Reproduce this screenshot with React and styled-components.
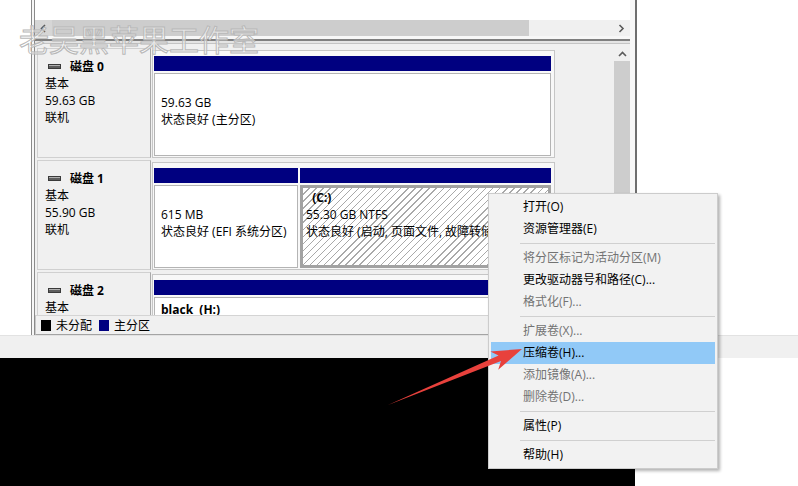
import styled, { createGlobalStyle } from 'styled-components';

const GlobalStyle = createGlobalStyle`
  body {
    margin: 0;
    font-family: "Open Sans", "Noto Sans CJK SC", sans-serif;
    font-size: 12px;
    color: #000;
  }
`;

const disks = [
  {
    name: '磁盘 0',
    lines: ['基本', '59.63 GB', '联机'],
    parts: [{ name: '', size: '59.63 GB', status: '状态良好 (主分区)' }],
  },
  {
    name: '磁盘 1',
    lines: ['基本', '55.90 GB', '联机'],
    parts: [
      { name: '', size: '615 MB', status: '状态良好 (EFI 系统分区)', width: 144 },
      {
        name: '  (C:)',
        size: '55.30 GB NTFS',
        status: '状态良好 (启动, 页面文件, 故障转储, 主分区)',
        selected: true,
      },
    ],
  },
  {
    name: '磁盘 2',
    lines: ['基本'],
    parts: [{ name: 'black  (H:)', size: '', status: '' }],
  },
];

const menuItems = [
  { label: '打开(O)' },
  { label: '资源管理器(E)' },
  { sep: true },
  { label: '将分区标记为活动分区(M)', disabled: true },
  { label: '更改驱动器号和路径(C)...' },
  { label: '格式化(F)...', disabled: true },
  { sep: true },
  { label: '扩展卷(X)...', disabled: true },
  { label: '压缩卷(H)...', active: true },
  { label: '添加镜像(A)...', disabled: true },
  { label: '删除卷(D)...', disabled: true },
  { sep: true },
  { label: '属性(P)' },
  { sep: true },
  { label: '帮助(H)' },
];

const DiskIcon = () => (
  <svg width="13" height="7" viewBox="0 0 13 7">
    <rect x="0.5" y="1.5" width="12" height="4" fill="#5e5e5e" stroke="#3a3a3a" />
    <rect x="1" y="2" width="11" height="1" fill="#b0b0b0" />
  </svg>
);

const Chevron = ({ dir }) => {
  const pts = {
    left: '5,1 1.5,4.5 5,8',
    right: '1.5,1 5,4.5 1.5,8',
    up: '1,5 4.5,1.5 8,5',
  }[dir];
  const size = dir === 'up' ? { w: 9, h: 7 } : { w: 7, h: 9 };
  return (
    <svg width={size.w} height={size.h} viewBox={`0 0 ${size.w} ${size.h}`}>
      <polyline points={pts} fill="none" stroke="#5a5a5a" strokeWidth="1.6" />
    </svg>
  );
};

const App = () => {
  return (
    <Screen>
      <GlobalStyle />
      <TopArea>
        <Blank style={{ width: 31 }} />
        <Window>
          <ListPane />
          <HScroll>
            <ScrollButton $bg="#d6d6d6">
              <Chevron dir="left" />
            </ScrollButton>
            <HThumb />
            <HTrack />
            <ScrollButton $bg="#f0f0f0">
              <Chevron dir="right" />
            </ScrollButton>
          </HScroll>
          <Splitter />
          <DiskPane>
            <DiskArea>
              <DiskList>
                {disks.map((d) => (
                  <DiskRow key={d.name}>
                    <DiskLabel>
                      <DiskTitle>
                        <DiskIcon />
                        <b>{d.name}</b>
                      </DiskTitle>
                      {d.lines.map((l) => (
                        <div key={l}>{l}</div>
                      ))}
                    </DiskLabel>
                    <PartitionBox>
                      {d.parts.map((p, i) => (
                        <Partition key={i} $width={p.width}>
                          <PartBar />
                          <PartBody $selected={p.selected}>
                            <VolName>{p.name || '\u00a0'}</VolName>
                            <div>{p.size || '\u00a0'}</div>
                            <div>{p.status || '\u00a0'}</div>
                          </PartBody>
                        </Partition>
                      ))}
                    </PartitionBox>
                  </DiskRow>
                ))}
              </DiskList>
              <VScroll>
                <VButton>
                  <Chevron dir="up" />
                </VButton>
                <VThumb />
              </VScroll>
            </DiskArea>
            <Legend>
              <Swatch $color="#000" />
              <span>未分配</span>
              <Swatch $color="#000080" />
              <span>主分区</span>
            </Legend>
          </DiskPane>
        </Window>
        <Blank style={{ flex: 1 }} />
      </TopArea>
      <StatusBand />
      <BottomArea>
        <Desktop />
      </BottomArea>

      <Watermark>老吴黑苹果工作室</Watermark>

      <Menu>
        {menuItems.map((m, i) =>
          m.sep ? (
            <MenuSep key={i} />
          ) : (
            <MenuItem key={i} $disabled={m.disabled} $active={m.active}>
              {m.label}
            </MenuItem>
          )
        )}
      </Menu>

      <ArrowLayer width="798" height="486" viewBox="0 0 798 486">
        <polygon
          points="388,405 498.6,355.5 490.4,351.4 522,349 498.2,369.8 501,361.1"
          fill="#e8413c"
        />
      </ArrowLayer>
    </Screen>
  );
};

const Screen = styled.div`
  position: relative;
  width: 798px;
  height: 486px;
  overflow: hidden;
  background: #fff;
`;

const TopArea = styled.div`
  display: flex;
  height: 335px;
`;

const Blank = styled.div`
  background: #fff;
`;

const Window = styled.div`
  width: 606px;
  box-sizing: border-box;
  border-left: 4px double #8a8a8a;
  border-right: 2px solid #6e6e6e;
  padding-right: 5px;
  background: #f7f7f7;
  display: flex;
  flex-direction: column;
`;

const ListPane = styled.div`
  height: 20px;
  background: #fff;
`;

const HScroll = styled.div`
  height: 16px;
  display: flex;
  background: #f0f0f0;
`;

const ScrollButton = styled.div`
  width: 17px;
  display: flex;
  align-items: center;
  justify-content: center;
  background: ${(p) => p.$bg};
`;

const HThumb = styled.div`
  width: 477px;
  background: #cdcdcd;
`;

const HTrack = styled.div`
  flex: 1;
  background: #f0f0f0;
`;

const Splitter = styled.div`
  margin-top: 3px;
  height: 5px;
  box-sizing: border-box;
  border-top: 2px solid #7f7f7f;
  border-bottom: 1px solid #c4c4c4;
  background: #e4e4e4;
`;

const DiskPane = styled.div`
  flex: 1;
  min-height: 0;
  display: flex;
  flex-direction: column;
  background: #f0f0f0;
`;

const DiskArea = styled.div`
  flex: 1;
  min-height: 0;
  display: flex;
  overflow: hidden;
`;

const DiskList = styled.div`
  flex: 1;
  padding: 4px 0 0 2px;
  display: flex;
  flex-direction: column;
  gap: 2px;
  overflow: hidden;
`;

const DiskRow = styled.div`
  display: flex;
  height: 110px;
  flex-shrink: 0;
`;

const DiskLabel = styled.div`
  width: 114px;
  box-sizing: border-box;
  border: 1px solid #d0d0d0;
  border-right-color: #a8a8a8;
  background: #f0f0f0;
  padding: 9px 0 0 7px;
  line-height: 17px;
`;

const DiskTitle = styled.div`
  display: flex;
  align-items: center;
  gap: 9px;
  padding-left: 3px;

  b {
    font-weight: bold;
  }
`;

const PartitionBox = styled.div`
  width: 403px;
  height: 108px;
  box-sizing: border-box;
  margin: 2px 0 0 1px;
  border: 1px solid #c6c6c6;
  background: #f8f8f8;
  padding: 5px 3px 1px 1px;
  display: flex;
  gap: 2px;
`;

const Partition = styled.div`
  display: flex;
  flex-direction: column;
  min-width: 0;
  ${(p) => (p.$width ? `width: ${p.$width}px; flex-shrink: 0;` : 'flex: 1;')}
`;

const PartBar = styled.div`
  height: 15px;
  background: #000080;
`;

const PartBody = styled.div`
  flex: 1;
  margin-top: 2px;
  box-sizing: border-box;
  overflow: hidden;
  white-space: nowrap;
  line-height: 17px;
  border: ${(p) => (p.$selected ? '3px solid #a2a2a2' : '1px solid #b4b4b4')};
  padding: ${(p) => (p.$selected ? '1px 3px' : '3px 6px')};
  background: ${(p) =>
    p.$selected
      ? 'repeating-linear-gradient(135deg, #fff 0 4px, #a9a9a9 4px 5px)'
      : '#fff'};
`;

const VolName = styled.div`
  font-weight: bold;
  white-space: pre;
`;

const VScroll = styled.div`
  width: 16px;
  margin: 3px 0 0 1px;
  display: flex;
  flex-direction: column;
  background: #f0f0f0;
`;

const VButton = styled.div`
  height: 14px;
  display: flex;
  align-items: center;
  justify-content: center;
`;

const VThumb = styled.div`
  height: 220px;
  background: #cdcdcd;
`;

const Legend = styled.div`
  height: 20px;
  box-sizing: border-box;
  border-top: 1px solid #d4d4d4;
  border-bottom: 1px solid #a4a4a4;
  border-left: 1px solid #c8c8c8;
  background: #f0f0f0;
  display: flex;
  align-items: center;
  padding-left: 5px;
  gap: 5px;

  span {
    margin-right: 2px;
  }
`;

const Swatch = styled.div`
  width: 10px;
  height: 11px;
  background: ${(p) => p.$color};
`;

const StatusBand = styled.div`
  height: 23px;
  box-sizing: border-box;
  border-top: 1px solid #e2e2e2;
  background: #f0f0f0;
`;

const BottomArea = styled.div`
  display: flex;
  height: 128px;
`;

const Desktop = styled.div`
  width: 635px;
  background: #000;
`;

const Watermark = styled.div`
  position: absolute;
  left: 19px;
  top: 21px;
  font-family: "Noto Sans CJK SC", sans-serif;
  font-size: 30px;
  line-height: 34px;
  color: rgba(255, 255, 255, 0.55);
  -webkit-text-stroke: 1px #b8b8b8;
  pointer-events: none;
`;

const Menu = styled.div`
  position: absolute;
  left: 488px;
  top: 193px;
  width: 230px;
  box-sizing: border-box;
  border: 1px solid #cccccc;
  background: #f2f2f2;
  padding: 2px;
  box-shadow: 2px 2px 3px rgba(0, 0, 0, 0.3);
  font-family: "Open Sans", "Noto Sans CJK SC", sans-serif;
`;

const MenuItem = styled.div`
  height: 22px;
  line-height: 22px;
  padding-left: 32px;
  white-space: nowrap;
  color: ${(p) => (p.$disabled ? '#737373' : '#000')};
  background: ${(p) => (p.$active ? '#91c9f7' : 'transparent')};
`;

const MenuSep = styled.div`
  height: 7px;
  display: flex;
  align-items: center;
  padding-left: 29px;

  &::after {
    content: '';
    flex: 1;
    height: 1px;
    background: #d0d0d0;
  }
`;

const ArrowLayer = styled.svg`
  position: absolute;
  left: 0;
  top: 0;
  pointer-events: none;
`;

export default App;
